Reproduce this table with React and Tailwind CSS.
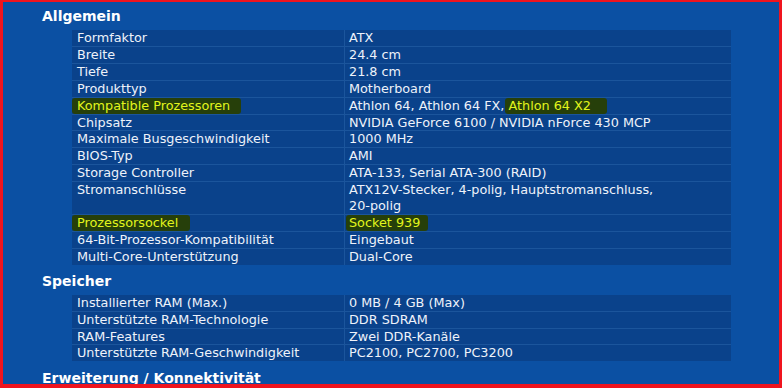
import React from "react";

const Mark = ({ children, className = "" }) => (
  <span className={`inline-block rounded-[3px] bg-[#263f0a] text-[#e2f51c] ${className}`}>
    {children}
  </span>
);

const allgemein = [
  ["Formfaktor", "ATX"],
  ["Breite", "24.4 cm"],
  ["Tiefe", "21.8 cm"],
  ["Produkttyp", "Motherboard"],
  [
    <Mark className="-ml-[5px] pl-[5px] pr-[11px]">Kompatible Prozessoren</Mark>,
    <>
      Athlon 64, Athlon 64 FX,{" "}
      <Mark className="-ml-[3px] pl-[3px] pr-[16px]">Athlon 64 X2</Mark>
    </>,
  ],
  ["Chipsatz", "NVIDIA GeForce 6100 / NVIDIA nForce 430 MCP"],
  ["Maximale Busgeschwindigkeit", "1000 MHz"],
  ["BIOS-Typ", "AMI"],
  ["Storage Controller", "ATA-133, Serial ATA-300 (RAID)"],
  [
    "Stromanschlüsse",
    <>
      ATX12V-Stecker, 4-polig, Hauptstromanschluss,
      <br />
      20-polig
    </>,
  ],
  [
    <Mark className="-ml-[5px] pl-[5px] pr-[12px]">Prozessorsockel</Mark>,
    <Mark className="-ml-[3px] pl-[3px] pr-[8px]">Socket 939</Mark>,
  ],
  ["64-Bit-Prozessor-Kompatibilität", "Eingebaut"],
  ["Multi-Core-Unterstützung", "Dual-Core"],
];

const speicher = [
  ["Installierter RAM (Max.)", "0 MB / 4 GB (Max)"],
  ["Unterstützte RAM-Technologie", "DDR SDRAM"],
  ["RAM-Features", "Zwei DDR-Kanäle"],
  ["Unterstützte RAM-Geschwindigkeit", "PC2100, PC2700, PC3200"],
];

const Heading = ({ children, className = "" }) => (
  <div className={`flex h-[28px] items-center pl-[39px] text-[14px] font-bold text-white ${className}`}>
    {children}
  </div>
);

const SpecTable = ({ rows }) => (
  <div className="ml-[69px] grid w-[659px] grid-cols-[272px_1fr] gap-px bg-[#1b559c]">
    {rows.map(([label, value], i) => (
      <React.Fragment key={i}>
        <div className="whitespace-nowrap bg-[#0a428b] pl-[5px] leading-[15.9px]">{label}</div>
        <div className="whitespace-nowrap bg-[#0a428b] pl-[4px] leading-[15.9px]">{value}</div>
      </React.Fragment>
    ))}
  </div>
);

export default function App() {
  return (
    <div
      className="h-[388px] w-[782px] overflow-hidden border-t-[2px] border-r-[3px] border-b-[4px] border-l-[3px] border-[#f0141e] bg-[#0b50a3] text-[12.8px] text-[#eef2fa]"
      style={{ fontFamily: '"DejaVu Sans", Verdana, sans-serif' }}
    >
      <Heading>Allgemein</Heading>
      <SpecTable rows={allgemein} />
      <Heading className="h-[30px] pt-[4px]">Speicher</Heading>
      <SpecTable rows={speicher} />
      <Heading className="h-[30px] pt-[5px]">Erweiterung / Konnektivität</Heading>
    </div>
  );
}
